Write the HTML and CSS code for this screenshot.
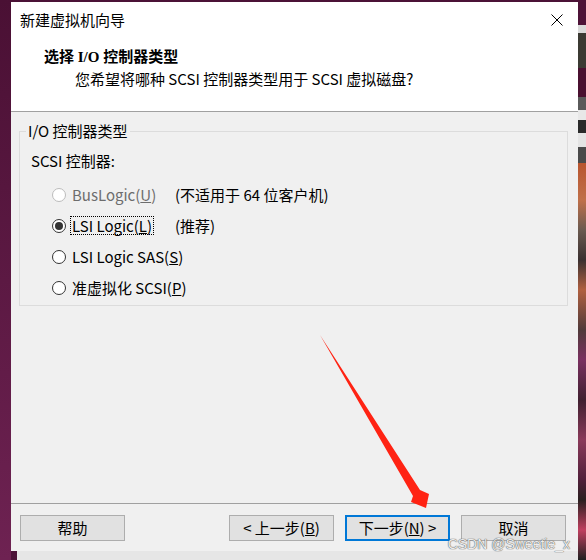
FILE: index.html
```html
<!DOCTYPE html>
<html>
<head>
  <title>新建虚拟机向导</title>
  <link rel="stylesheet" href="styles.css">
</head>
<body>
  <div class="desk-left"></div>

  <div class="desk-main">
    <div class="wizard">
      <div class="wizard-titlebar">
        <span class="wizard-title">新建虚拟机向导</span>
        <svg class="wizard-close" width="12" height="12" viewBox="0 0 12 12">
          <path d="M0.5 0.5 L11.5 11.5 M11.5 0.5 L0.5 11.5" stroke="#000" stroke-width="1" fill="none"/>
        </svg>
      </div>

      <div class="wizard-header">
        <h2>选择 I/O 控制器类型</h2>
        <p>您希望将哪种 SCSI 控制器类型用于 SCSI 虚拟磁盘?</p>
      </div>

      <div class="wizard-body">
        <fieldset class="group">
          <legend>I/O 控制器类型</legend>
          <div class="group-label">SCSI 控制器:</div>
          <div class="radio-list">
            <div class="radio-row disabled">
              <span class="radio"></span>
              <span class="radio-text"><span>BusLogic(<u>U</u>)</span></span>
              <span class="radio-note">(不适用于 64 位客户机)</span>
            </div>
            <div class="radio-row">
              <span class="radio checked"></span>
              <span class="radio-text"><span class="focus">LSI Logic(<u>L</u>)</span></span>
              <span class="radio-note">(推荐)</span>
            </div>
            <div class="radio-row">
              <span class="radio"></span>
              <span class="radio-text"><span>LSI Logic SAS(<u>S</u>)</span></span>
            </div>
            <div class="radio-row">
              <span class="radio"></span>
              <span class="radio-text"><span>准虚拟化 SCSI(<u>P</u>)</span></span>
            </div>
          </div>
        </fieldset>
      </div>

      <div class="wizard-footer">
        <button class="btn">帮助</button>
        <div class="btn-group">
          <button class="btn">&lt; 上一步(<u>B</u>)</button>
          <button class="btn default">下一步(<u>N</u>) &gt;</button>
          <button class="btn">取消</button>
        </div>
      </div>
    </div>
    <div class="desk-under"></div>
  </div>

  <div class="desk-right"></div>

  <svg class="arrow" width="586" height="560" viewBox="0 0 586 560">
    <polygon points="320,335 420,490 429,494 426,508 411,502 413,496" fill="#ff2313"/>
  </svg>

  <div class="watermark">CSDN @Sweetie_x</div>
</body>
</html>
```

FILE: styles.css
```css
* {
  box-sizing: border-box;
}

body {
  margin: 0;
  width: 586px;
  height: 560px;
  overflow: hidden;
  position: relative;
  display: flex;
  background: #4b1236;
  font-family: "Noto Sans CJK SC", "Liberation Sans", sans-serif;
  font-size: 15px;
  color: #000;
}

.desk-left {
  width: 11px;
  background: linear-gradient(to bottom, #4a1034, #6e2252);
}

.desk-main {
  width: 567px;
  display: flex;
  flex-direction: column;
}

.desk-right {
  width: 8px;
  background: linear-gradient(to bottom,
    #4e1338 0, #4e1338 25px,
    #d9d9d9 25px, #d9d9d9 33px,
    #3b3a33 33px, #3b3a33 68px,
    #4a1030 68px, #4a1030 97px,
    #5a5a5a 97px, #5a5a5a 110px,
    #e8e8e8 110px, #e8e8e8 120px,
    #2a2a2a 120px, #2a2a2a 133px,
    #e4e4e4 133px, #e4e4e4 147px,
    #4a4a4a 147px, #4a4a4a 163px,
    #b8552f 163px, #c0704a 200px,
    #6a5a50 230px, #3a3030 260px,
    #b06040 290px, #503a3a 330px,
    #7a3060 360px, #402030 400px,
    #8a3a5a 440px, #50203a 480px,
    #2a2020 500px, #c04060 530px, #202020 560px);
}

.wizard {
  margin-top: 2px;
  height: 549px;
  display: flex;
  flex-direction: column;
  background: #f0f0f0;
}

.desk-under {
  flex: 1;
  margin-left: 6px;
  background: #e6e6e6;
}

/* title bar + header, both white */
.wizard-titlebar {
  height: 36px;
  display: flex;
  align-items: center;
  justify-content: space-between;
  padding: 0 15px 0 9px;
  background: #fff;
}

.wizard-title {
  line-height: 20px;
}

.wizard-close {
  margin-bottom: 1px;
}

.wizard-header {
  background: #fff;
  padding: 9px 0 22px 0;
  border-bottom: 1px solid #a0a0a0;
}

.wizard-header h2 {
  margin: 0 0 2px 33px;
  font-family: "Liberation Serif", "Noto Sans CJK SC", serif;
  font-size: 15px;
  font-weight: bold;
  line-height: 20px;
}

.wizard-header p {
  margin: 0 0 0 64px;
  line-height: 20px;
}

.wizard-body {
  flex: 1;
  padding: 9px 10px 0 8px;
}

.group {
  margin: 0;
  padding: 0 0 2px 0;
  border: 1px solid #dcdcdc;
}

.group legend {
  margin-left: 6px;
  padding: 0 2px;
  line-height: 20px;
}

.group-label {
  margin: 10px 0 0 11px;
  line-height: 20px;
}

.radio-list {
  margin-top: 8px;
  padding-left: 32px;
}

.radio-row {
  height: 31px;
  display: flex;
  align-items: center;
}

.radio {
  width: 14px;
  height: 14px;
  border: 1px solid #333;
  border-radius: 50%;
  background: #fff;
  display: flex;
  align-items: center;
  justify-content: center;
  flex-shrink: 0;
}

.radio.checked::after {
  content: "";
  width: 8px;
  height: 8px;
  border-radius: 50%;
  background: #333;
}

.radio-text {
  width: 105px;
  margin-left: 4px;
  white-space: nowrap;
  flex-shrink: 0;
}

.radio-text span {
  display: inline-block;
  padding: 0 1px;
  line-height: 17px;
  border: 1px dotted transparent;
}

.radio-text .focus {
  border-color: #000;
}

.radio-row.disabled .radio {
  border-color: #bcbcbc;
}

.radio-row.disabled .radio-text {
  color: #6d6d6d;
}

.radio-note {
  line-height: 20px;
  white-space: nowrap;
}

.wizard-footer {
  display: flex;
  justify-content: space-between;
  padding: 11px 12px 10px 9px;
  border-top: 1px solid #a0a0a0;
}

.btn-group {
  display: flex;
  gap: 11px;
}

.btn {
  width: 105px;
  height: 26px;
  padding: 0;
  background: #e1e1e1;
  border: 1px solid #adadad;
  font-family: "Noto Sans CJK SC", "Liberation Sans", sans-serif;
  font-size: 15px;
  line-height: 20px;
  color: #000;
}

.btn.default {
  border: 2px solid #0078d7;
}

.arrow {
  position: absolute;
  left: 0;
  top: 0;
  pointer-events: none;
}

.watermark {
  position: absolute;
  right: 16px;
  bottom: 8px;
  font-family: "Liberation Sans", sans-serif;
  font-size: 14px;
  color: #ececec;
  text-shadow: 0 0 1px #555, 0 0 1px #555;
}
```
